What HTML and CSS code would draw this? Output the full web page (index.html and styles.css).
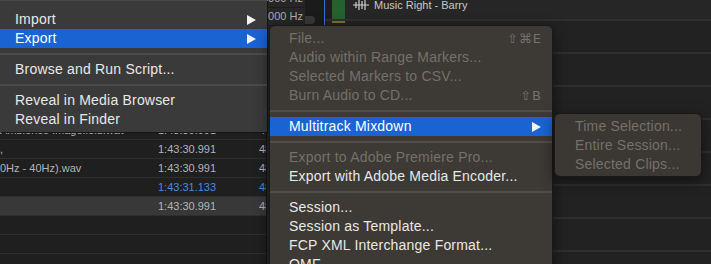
FILE: index.html
```html
<!DOCTYPE html>
<html lang="en">
<head>
    <meta charset="UTF-8">
    <title>Export Menu</title>
    <link rel="stylesheet" href="styles.css">
</head>
<body>
    <div class="app">
        <!-- Files panel -->
        <div class="files">
            <div class="row"><span class="name"></span><span class="time"></span><span class="rate"></span></div>
            <div class="row"><span class="name">Crowd Walla.wav</span><span class="time">1:43:30.991</span><span class="rate">48000</span></div>
            <div class="row"><span class="name">Room Tone.wav</span><span class="time">1:43:30.991</span><span class="rate">48000</span></div>
            <div class="row"><span class="name">Music Left.wav</span><span class="time">1:43:30.991</span><span class="rate">48000</span></div>
            <div class="row"><span class="name">Music Right.wav</span><span class="time">1:43:30.991</span><span class="rate">48000</span></div>
            <div class="row"><span class="name">Dialogue.wav</span><span class="time">1:43:30.991</span><span class="rate">48000</span></div>
            <div class="row"><span class="name">Wind Layer.wav</span><span class="time">1:43:30.991</span><span class="rate">48000</span></div>
            <div class="row"><span class="name">Ambience Imagefield.wav</span><span class="time">1:43:30.991</span><span class="rate">48000</span></div>
            <div class="row"><span class="name">,</span><span class="time">1:43:30.991</span><span class="rate">48000</span></div>
            <div class="row"><span class="name">0Hz - 40Hz).wav</span><span class="time">1:43:30.991</span><span class="rate">48000</span></div>
            <div class="row blue"><span class="name"></span><span class="time">1:43:31.133</span><span class="rate">48000</span></div>
            <div class="row selected"><span class="name"></span><span class="time">1:43:30.991</span><span class="rate">48000</span></div>
            <div class="row"></div>
            <div class="row"></div>
            <div class="row"></div>
        </div>

        <!-- Frequency labels -->
        <div class="freq">
            <div class="freq-row">3000 Hz</div>
            <div class="freq-row">3000 Hz</div>
            <div class="freq-row"></div>
        </div>

        <div class="gutter"><span class="knob"></span></div>
        <div class="cursor"></div>

        <!-- Tracks -->
        <div class="tracks">
            <div class="track first">
                <div class="clip"></div>
                <div class="track-head">
                    <svg class="wave" width="16" height="10" viewBox="0 0 16 10">
                        <path d="M0 5H16M3 2V8M6 0V10M9 1V9M12 0V10" stroke="#cfcfcf" stroke-width="1.2" fill="none"/>
                    </svg>
                    <span>Music Right - Barry</span>
                </div>
            </div>
            <div class="track"><div class="clip-mark"></div></div>
            <div class="track"></div>
            <div class="track"></div>
            <div class="track"></div>
            <div class="track"></div>
            <div class="track"></div>
            <div class="track"></div>
            <div class="track"></div>
        </div>
    </div>

    <!-- File menu (tail end) -->
    <div class="menu menu-main">
        <div class="item">Import<span class="arrow"></span></div>
        <div class="item active">Export<span class="arrow"></span></div>
        <div class="sep"></div>
        <div class="item">Browse and Run Script...</div>
        <div class="sep"></div>
        <div class="item">Reveal in Media Browser</div>
        <div class="item">Reveal in Finder</div>
    </div>

    <!-- Export submenu -->
    <div class="menu submenu">
        <div class="item disabled">File...<span class="key">⇧⌘E</span></div>
        <div class="item disabled">Audio within Range Markers...</div>
        <div class="item disabled">Selected Markers to CSV...</div>
        <div class="item disabled">Burn Audio to CD...<span class="key">⇧B</span></div>
        <div class="sep"></div>
        <div class="item active">Multitrack Mixdown<span class="arrow"></span></div>
        <div class="sep"></div>
        <div class="item disabled">Export to Adobe Premiere Pro...</div>
        <div class="item">Export with Adobe Media Encoder...</div>
        <div class="sep"></div>
        <div class="item">Session...</div>
        <div class="item">Session as Template...</div>
        <div class="item">FCP XML Interchange Format...</div>
        <div class="item">OMF...</div>
    </div>

    <!-- Multitrack Mixdown submenu -->
    <div class="menu mixdown">
        <div class="item disabled">Time Selection...</div>
        <div class="item disabled">Entire Session...</div>
        <div class="item disabled">Selected Clips...</div>
    </div>
</body>
</html>
```

FILE: styles.css
```css
body {
    margin: 0;
    width: 711px;
    height: 264px;
    overflow: hidden;
    position: relative;
    background: #1f1f1f;
    font-family: "Liberation Sans", Arial, sans-serif;
}
.app {
    display: flex;
    height: 264px;
    overflow: hidden;
}

/* files panel */
.files {
    width: 267px;
    flex: none;
    overflow: hidden;
    margin-top: -12px;
    background: #1f1f1f;
    border-right: 1px solid #141414;
    box-sizing: border-box;
}
.row {
    display: flex;
    height: 18px;
    line-height: 18px;
    border-bottom: 1px solid #2e2e2e;
    font-size: 11px;
    color: #b4b4b4;
    white-space: nowrap;
}
.row .name {
    width: 158px;
    flex: none;
    overflow: hidden;
}
.row .time {
    width: 101px;
    flex: none;
}
.row.blue {
    color: #3f8fdc;
}
.row.selected {
    background: #383838;
}

/* frequency labels */
.freq {
    width: 38px;
    flex: none;
    overflow: hidden;
    margin-top: -10px;
    background: #262626;
}
.freq-row {
    height: 17px;
    line-height: 17px;
    border-bottom: 1px solid #1c1c1c;
    font-size: 11px;
    color: #aaa;
    margin-left: -5px;
    white-space: nowrap;
}
.gutter {
    width: 19px;
    flex: none;
    background: #1b1b1b;
    padding-top: 16px;
    box-sizing: border-box;
}
.knob {
    display: block;
    width: 10px;
    height: 8px;
    border-radius: 0 5px 5px 0;
    background: #383838;
}
.cursor {
    width: 1px;
    flex: none;
    background: #2f6fd0;
}

/* tracks */
.tracks {
    flex: 1;
    margin-top: -12px;
    background: #222;
}
.track {
    height: 31px;
    border-bottom: 2px solid #2f2f2f;
    display: flex;
    padding-left: 7px;
}
.track.first {
    background: #1d1d1d;
}
.clip {
    width: 13px;
    flex: none;
    background: #24612f;
}
.clip-mark {
    width: 13px;
    height: 2px;
    background: #7a7430;
}
.track-head {
    flex: 1;
    display: flex;
    align-items: center;
    gap: 5px;
    height: 13px;
    margin-top: 11px;
    padding-left: 8px;
    font-size: 11px;
    color: #c8c8c8;
    background: #262626;
}
.track.first .track-head {
    height: 31px;
    margin-top: 0;
    padding-top: 2px;
    box-sizing: border-box;
    align-items: center;
}

/* menus */
.menu {
    position: absolute;
    font-size: 14px;
    letter-spacing: 0.2px;
    color: #e8e8e8;
    box-sizing: border-box;
}
.item {
    display: flex;
    justify-content: space-between;
    align-items: center;
    height: 19px;
    line-height: 19px;
    white-space: nowrap;
}
.item.active {
    background: #1a63d3;
    color: #fff;
}
.item.disabled {
    color: #75706a;
}
.arrow {
    width: 0;
    height: 0;
    border-left: 9px solid #f2f2f2;
    border-top: 5px solid transparent;
    border-bottom: 5px solid transparent;
}
.key {
    font-family: "DejaVu Sans", sans-serif;
    font-size: 13px;
    letter-spacing: 1px;
}
.sep {
    height: 2px;
    margin: 5px 0;
}

.menu-main {
    left: 0;
    top: 0;
    width: 267px;
    background: #3a3a3a;
    border-top: 1px solid #4a4a4a;
    padding: 9px 0 3px;
    box-shadow: 1px 1px 0 #161616;
}
.menu-main .item {
    padding: 0 11px 0 15px;
}
.menu-main .sep {
    background: #4b4b4b;
}

.submenu {
    left: 269px;
    top: 25px;
    width: 284px;
    background: #3d3934;
    border: 1px solid #1b1917;
    border-radius: 6px;
    padding: 3px 0;
    box-shadow: 0 4px 14px rgba(0, 0, 0, 0.5);
}
.submenu .item {
    padding: 0 10px 0 19px;
}
.submenu .item.active .arrow {
    margin-right: 1px;
}
.submenu .sep {
    background: #524d47;
}

.mixdown {
    left: 554px;
    top: 113px;
    width: 148px;
    height: 64px;
    background: #3b3733;
    border: 1px solid #1b1917;
    border-radius: 6px;
    padding: 3px 0;
    box-shadow: 0 4px 14px rgba(0, 0, 0, 0.5);
}
.mixdown .item {
    padding: 0 10px 0 20px;
}
```
